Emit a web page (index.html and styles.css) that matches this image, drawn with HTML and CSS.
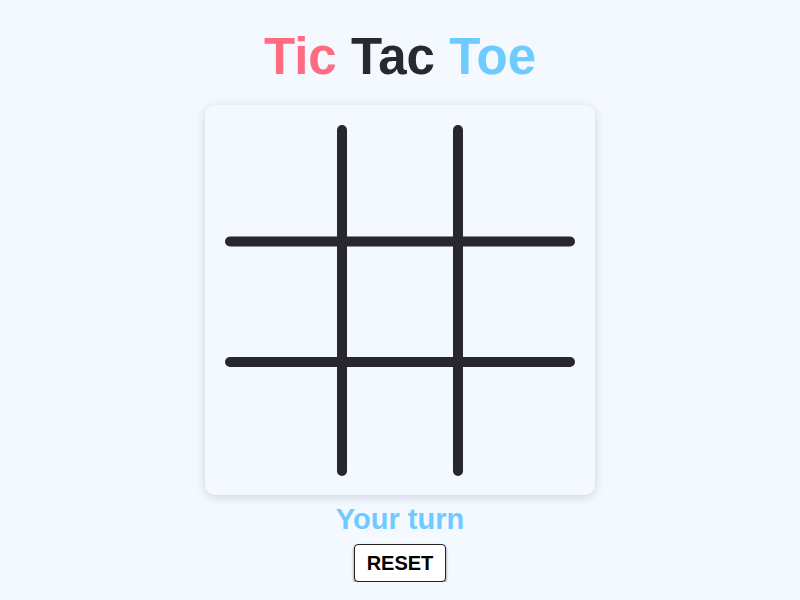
FILE: index.html
```html
<!DOCTYPE html>
<html lang="en">
<head>
<meta charset="utf-8">
<title>Tic Tac Toe</title>
<link rel="stylesheet" href="styles.css">
</head>
<body>
<main class="app">
  <h1 class="title"><span class="tic">Tic</span> <span class="tac">Tac</span> <span class="toe">Toe</span></h1>
  <div class="board">
    <svg class="grid" width="390" height="390" viewBox="0 0 390 390" aria-hidden="true">
      <g stroke="#272631" stroke-width="10" stroke-linecap="round">
        <line x1="137" y1="25" x2="137" y2="366"/>
        <line x1="253" y1="25" x2="253" y2="366"/>
        <line x1="25" y1="136.5" x2="365" y2="136.5"/>
        <line x1="25" y1="257" x2="365" y2="257"/>
      </g>
    </svg>
  </div>
  <p class="status">Your turn</p>
  <button class="reset">RESET</button>
</main>
</body>
</html>
```

FILE: styles.css
```css
html, body {
  margin: 0;
  padding: 0;
  background: #f4f8ff;
  font-family: "Liberation Sans", Arial, sans-serif;
}

.app {
  display: flex;
  flex-direction: column;
  align-items: center;
}

.title {
  margin: 29px 0 20px;
  font-size: 51px;
  line-height: 56px;
  font-weight: 700;
}

.tic { color: #ff6b81; }
.tac { color: #282833; }
.toe { color: #6dcbff; }

.board {
  width: 390px;
  height: 390px;
  border-radius: 10px;
  background: #f4f8ff;
  box-shadow: 0 2px 10px rgba(40, 50, 100, 0.18);
}

.grid {
  display: block;
}

.status {
  margin: 8px 0 0;
  font-size: 29px;
  line-height: 33px;
  font-weight: 700;
  color: #6dcbff;
}

.reset {
  margin-top: 8px;
  padding: 7px 12px 6px;
  font-family: "Liberation Sans", Arial, sans-serif;
  font-size: 20px;
  line-height: 23px;
  font-weight: 700;
  color: #000;
  background: #fff;
  border: 1px solid #222;
  border-radius: 4px;
  box-shadow: 0 2px 3px rgba(0, 0, 0, 0.5);
}
```
